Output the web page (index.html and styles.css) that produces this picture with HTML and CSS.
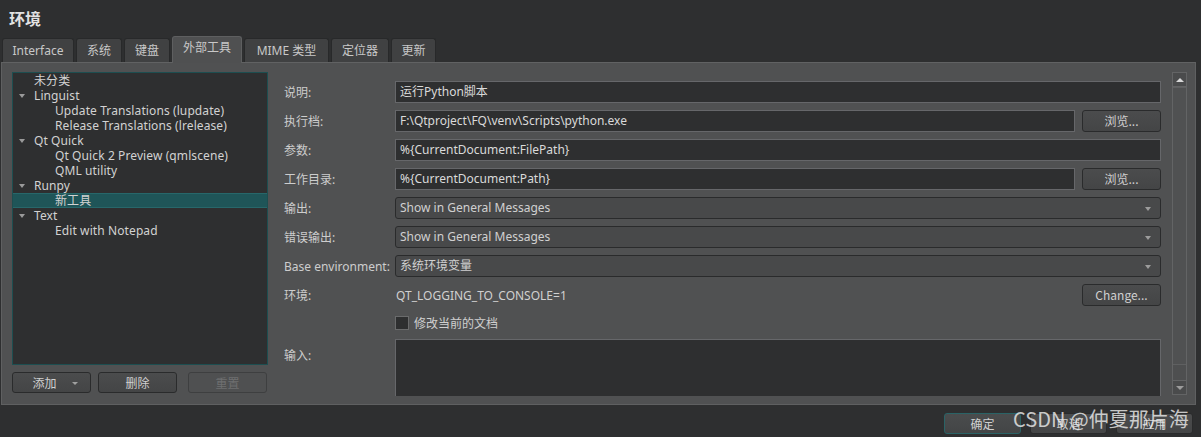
FILE: index.html
```html
<!DOCTYPE html>
<html>
<head>
<meta charset="utf-8">
<link rel="stylesheet" href="styles.css">
</head>
<body>
<div class="dialog">
  <div class="title">环境</div>
  <div class="tabs">
    <div class="tab t-interface">Interface</div>
    <div class="tab t-sys">系统</div>
    <div class="tab t-kbd">键盘</div>
    <div class="tab active t-ext">外部工具</div>
    <div class="tab t-mime">MIME 类型</div>
    <div class="tab t-loc">定位器</div>
    <div class="tab t-upd">更新</div>
  </div>
  <div class="pane">
    <div class="left">
      <div class="tree">
        <div class="row top"><span class="arrow none"></span>未分类</div>
        <div class="row top"><span class="arrow"></span>Linguist</div>
        <div class="row child">Update Translations (lupdate)</div>
        <div class="row child">Release Translations (lrelease)</div>
        <div class="row top"><span class="arrow"></span>Qt Quick</div>
        <div class="row child">Qt Quick 2 Preview (qmlscene)</div>
        <div class="row child">QML utility</div>
        <div class="row top"><span class="arrow"></span>Runpy</div>
        <div class="row child selected">新工具</div>
        <div class="row top"><span class="arrow"></span>Text</div>
        <div class="row child">Edit with Notepad</div>
      </div>
      <div class="tree-buttons">
        <div class="btn add">添加<span class="drop"></span></div>
        <div class="btn del">删除</div>
        <div class="btn reset disabled">重置</div>
      </div>
    </div>
    <div class="right">
      <div class="form">
        <div class="lbl">说明:</div>
        <div class="input span2">运行Python脚本</div>

        <div class="lbl">执行档:</div>
        <div class="input">F:\Qtproject\FQ\venv\Scripts\python.exe</div>
        <div class="btn">浏览...</div>

        <div class="lbl">参数:</div>
        <div class="input span2">%{CurrentDocument:FilePath}</div>

        <div class="lbl">工作目录:</div>
        <div class="input">%{CurrentDocument:Path}</div>
        <div class="btn">浏览...</div>

        <div class="lbl">输出:</div>
        <div class="combo span2">Show in General Messages<span class="carrow"></span></div>

        <div class="lbl">错误输出:</div>
        <div class="combo span2">Show in General Messages<span class="carrow"></span></div>

        <div class="lbl">Base environment:</div>
        <div class="combo span2">系统环境变量<span class="carrow"></span></div>

        <div class="lbl">环境:</div>
        <div class="plain">QT_LOGGING_TO_CONSOLE=1</div>
        <div class="btn">Change...</div>

        <div class="lbl"></div>
        <div class="check span2"><span class="box"></span>修改当前的文档</div>

        <div class="lbl lbl-top">输入:</div>
        <div class="textarea span2"></div>
      </div>
      <div class="scrollbar">
        <div class="sb-btn"><span class="up"></span></div>
        <div class="sb-track"></div>
        <div class="sb-btn"><span class="down"></span></div>
      </div>
    </div>
  </div>
  <div class="footer">
    <div class="btn dbtn default">确定</div>
    <div class="btn dbtn">取消</div>
    <div class="btn dbtn">应用</div>
  </div>
  <div class="watermark">CSDN @仲夏那片海</div>
</div>
</body>
</html>
```
FILE: styles.css
```css
* { box-sizing: border-box; }
html, body {
  margin: 0;
  padding: 0;
  background: #2e2f30;
  width: 1201px;
  height: 437px;
  overflow: hidden;
}
.dialog {
  position: relative;
  width: 1201px;
  height: 437px;
  font-family: "Noto Sans", "Noto Sans CJK SC", sans-serif;
  font-size: 12px;
  color: #cfcfcf;
}
.title {
  height: 36px;
  padding: 7px 0 0 9px;
  font-family: "Noto Sans CJK SC", sans-serif;
  font-weight: bold;
  font-size: 16px;
  line-height: 22px;
  color: #e2e2e2;
}
.tabs {
  display: flex;
  gap: 2px;
  padding-left: 2px;
  height: 26px;
  align-items: flex-end;
  position: relative;
  z-index: 2;
}
.tab {
  height: 24px;
  border: 1px solid #28292a;
  border-bottom: none;
  border-radius: 3px 3px 0 0;
  background: #404142;
  text-align: center;
  line-height: 23px;
  color: #c8c8c8;
}
.tab.active {
  height: 27px;
  background: #4f5051;
  border-color: #5e5f60;
  line-height: 22px;
  margin-bottom: -1px;
}
.t-interface { width: 72px; }
.t-sys { width: 46px; }
.t-kbd { width: 46px; }
.t-ext { width: 70px; }
.t-mime { width: 85px; }
.t-loc { width: 58px; }
.t-upd { width: 45px; }

.pane {
  margin-left: 1px;
  width: 1195px;
  height: 343px;
  background: #505152;
  border: 1px solid #5f6061;
  border-top-color: #616263;
  display: flex;
  padding: 9px 0 0 10px;
}
.left {
  width: 256px;
  display: flex;
  flex-direction: column;
}
.tree {
  height: 293px;
  background: #2e2f30;
  border: 1px solid #1d4e50;
  padding-top: 0;
}
.row {
  height: 15px;
  line-height: 15px;
  white-space: nowrap;
  color: #d2d2d2;
  letter-spacing: 0.1px;
}
.row.top { padding-left: 6px; display: flex; align-items: center; }
.row.child { padding-left: 42px; }
.row.selected { background: #1f5558; border: 1px solid #27676a; border-left: none; border-right: none; line-height: 13px; }
.arrow {
  display: inline-block;
  width: 0; height: 0;
  border-left: 3.5px solid transparent;
  border-right: 3.5px solid transparent;
  border-top: 4px solid #9a9a9a;
  margin-right: 9px;
}
.arrow.none { border-top-color: transparent; }

.tree-buttons {
  display: flex;
  margin-top: 7px;
}
.btn {
  height: 22px;
  border: 1px solid #2a2b2c;
  border-radius: 3px;
  background: linear-gradient(#4b4c4d, #444546);
  text-align: center;
  line-height: 20px;
  color: #d0d0d0;
  font-family: "Noto Sans CJK SC", "Noto Sans", sans-serif;
  font-size: 12px;
}
.tree-buttons .btn { width: 79px; height: 21px; line-height: 19px; }
.tree-buttons .del { margin-left: 7px; }
.tree-buttons .reset { margin-left: 11px; }
.btn.add { position: relative; padding-right: 14px; }
.drop {
  position: absolute;
  right: 12px; top: 9px;
  width: 0; height: 0;
  border-left: 3px solid transparent;
  border-right: 3px solid transparent;
  border-top: 3px solid #a0a0a0;
}
.btn.disabled {
  background: #4f5051;
  border-color: #3e3f40;
  color: #6e6f70;
}

.right {
  flex: 1;
  display: flex;
  padding-left: 16px;
  height: 324px;
  overflow: hidden;
}
.form {
  width: 877px;
  padding-top: 9px;
  display: grid;
  grid-template-columns: 104px 1fr 79px;
  grid-auto-rows: 22px;
  column-gap: 7px;
  row-gap: 7px;
  align-items: center;
}
.lbl {
  color: #cdcdcd;
  white-space: nowrap;
  font-family: "Noto Sans", "Noto Sans CJK SC", sans-serif;
}
.lbl-top { align-self: start; padding-top: 4px; }
.span2 { grid-column: 2 / 4; }
.input {
  height: 22px;
  background: #2e2f30;
  border: 1px solid #66676a;
  line-height: 20px;
  padding-left: 4px;
  color: #dadada;
  white-space: nowrap;
}
.combo {
  position: relative;
  height: 22px;
  background: #48494a;
  border: 1px solid #2a2b2c;
  border-radius: 3px;
  line-height: 20px;
  padding-left: 4px;
  color: #d0d0d0;
}
.carrow {
  position: absolute;
  right: 9px; top: 9px;
  width: 0; height: 0;
  border-left: 3.5px solid transparent;
  border-right: 3.5px solid transparent;
  border-top: 4px solid #9c9c9c;
}
.plain { padding-left: 1px; color: #d0d0d0; }
.check {
  display: flex;
  align-items: center;
  color: #cfcfcf;
  height: 14px;
  align-self: start;
  margin-top: 3px;
}
.box {
  width: 14px; height: 14px;
  background: #2e2f30;
  border: 1px solid #6a6b6c;
  margin-right: 5px;
}
.textarea {
  align-self: start;
  height: 70px;
  margin-top: -3px;
  background: #2e2f30;
  border: 1px solid #66676a;
}
.scrollbar {
  margin-left: 11px;
  width: 15px;
  height: 323px;
  display: flex;
  flex-direction: column;
}
.sb-btn {
  height: 15px;
  background: #4a4b4c;
  border: 1px solid #636465;
  display: flex;
  align-items: center;
  justify-content: center;
}
.sb-track {
  flex: 1;
  background: #4e4f50;
  border-left: 1px solid #636465;
  border-right: 1px solid #636465;
  position: relative;
}
.sb-track::after {
  content: "";
  position: absolute;
  left: 0; right: 0; top: 0; height: 276px;
  border: 1px solid #5f6061;
  border-left: none; border-right: none;
  background: #505152;
}
.up, .down {
  width: 0; height: 0;
  border-left: 4px solid transparent;
  border-right: 4px solid transparent;
}
.up { border-bottom: 4px solid #d8d8d8; }
.down { border-top: 4px solid #9c9c9c; }

.footer {
  display: flex;
  justify-content: flex-end;
  padding: 8px 8px 0 0;
  gap: 9px;
}
.dbtn { width: 77px; height: 21px; line-height: 19px; }
.dbtn.default { border-color: #2a6366; background: linear-gradient(#4a4c4d, #434546); }

.watermark {
  position: absolute;
  left: 1013px;
  top: 404px;
  font-family: "Noto Sans CJK SC", sans-serif;
  font-size: 20px;
  color: rgba(235, 235, 235, 0.82);
  white-space: nowrap;
}
```
